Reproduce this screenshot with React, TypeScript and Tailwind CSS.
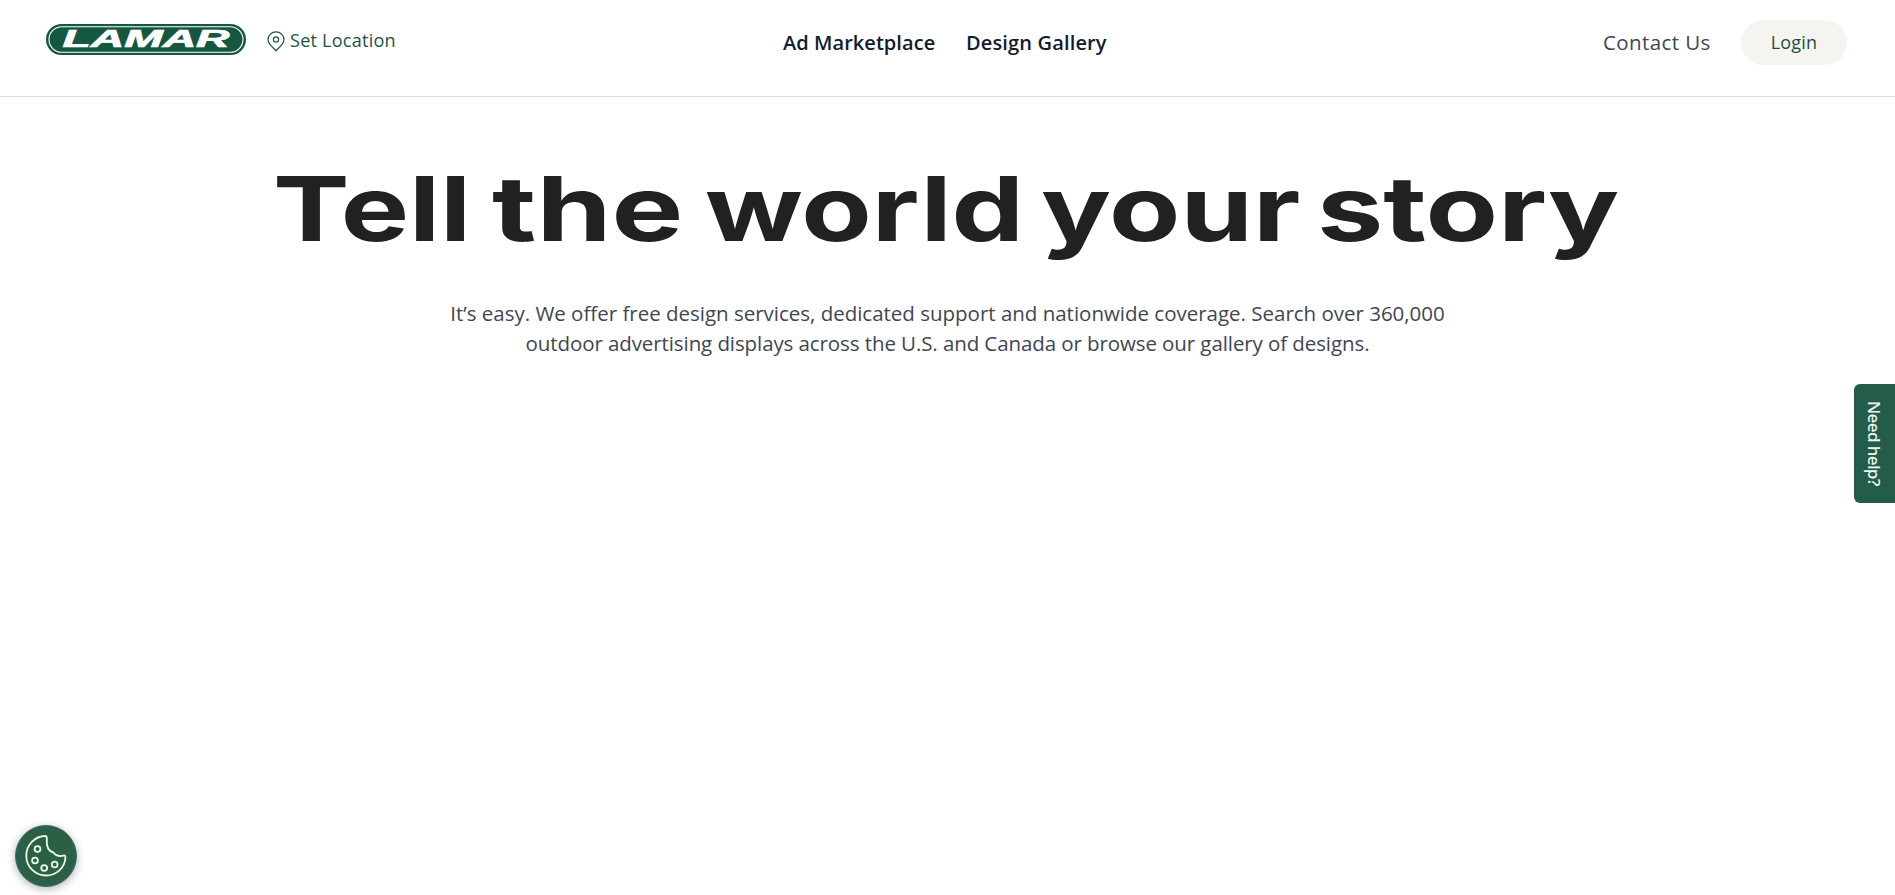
import {ReactNode} from "react";

function Logo() {
    return (
        <svg width="200" height="31" viewBox="0 0 200 31" aria-label="Lamar">
            <rect x="0" y="0" width="200" height="31" rx="15.5" fill="#14593f"/>
            <rect x="3" y="2.7" width="194" height="25.6" rx="12.8" fill="none" stroke="#fff" strokeWidth="1.1"/>
            <text x="16.5" y="23.4" fontFamily="Liberation Sans, sans-serif" fontWeight="700" fontStyle="italic"
                  fontSize="23.2" textLength="167" lengthAdjust="spacingAndGlyphs" fill="#fff" stroke="#fff"
                  strokeWidth="0.7">LAMAR
            </text>
        </svg>
    );
}

function PinIcon() {
    return (
        <svg width="18" height="21" viewBox="0 0 18 21" fill="none" stroke="#1d5242" strokeWidth="1.2">
            <path d="M9 19.8C7.6 17.9 1 13.3 1 8.7a8 7.9 0 0 1 16 0c0 4.6-6.6 9.2-8 11.1Z" strokeLinejoin="round"/>
            <circle cx="9" cy="8.4" r="2.6"/>
        </svg>
    );
}

function CookieIcon() {
    return (
        <svg width="42" height="42" viewBox="0 0 42 42" fill="none" stroke="#e9fbe9" strokeWidth="1.8"
             strokeLinejoin="round">
            <path d="M20.5 1C9.5 1 1.3 10 1.3 20.7c0 11 8.7 19.8 19.6 19.8 10.5 0 19.1-7.8 19.5-18 .1-1.7-.4-2.3-1.9-1.9-4.6 1.2-8.1-.4-10.3-3.2-4-1.1-6.9-5.6-6.4-12.9.1-2-.2-3.5-1.3-3.5Z"/>
            <circle cx="12.5" cy="14" r="2.9"/>
            <circle cx="10" cy="25.5" r="2.9"/>
            <circle cx="19.2" cy="33" r="2.9"/>
            <circle cx="29.7" cy="29.5" r="2.9"/>
        </svg>
    );
}

// Headline words are stretched sideways inside a box of their final width
function Word(props: { className: string, stretch: string, children: ReactNode }) {
    return (
        <span className={"block whitespace-nowrap " + props.className}>
            <span className={"inline-block origin-left " + props.stretch}>{props.children}</span>
        </span>
    );
}

export default function App() {
    return (
        <div className="min-h-[895px] bg-white font-['Open_Sans',sans-serif] overflow-hidden">
            <header className="h-[97px] border-b border-[#dedede] flex items-start justify-between pl-[46px] pr-12">
                <div className="flex w-[737px] pt-6">
                    <Logo/>
                    <a href="#" className="flex ml-[21px] pt-[7px] text-[#1d5242]">
                        <PinIcon/>
                        <span className="ml-[5px] -mt-[3px] text-[18px] leading-6 tracking-[0.26px]">Set Location</span>
                    </a>
                </div>
                <nav className="flex flex-1 gap-8 pt-[29px] text-[20px] leading-7 font-semibold text-[#121c2f]">
                    <a href="#" className="w-[151px] whitespace-nowrap tracking-[0.05px]">Ad Marketplace</a>
                    <a href="#" className="whitespace-nowrap tracking-[0.15px]">Design Gallery</a>
                </nav>
                <div className="flex pt-5">
                    <a href="#" className="w-[138px] pt-[8px] text-[20.5px] leading-7 tracking-[0.4px] text-[#404750]">Contact Us</a>
                    <button className="w-[106px] h-[45px] rounded-full bg-[#f5f4f1] text-[18px] tracking-[0.2px] text-[#1d4f40]">Login</button>
                </div>
            </header>
            <main>
                <h1 className="flex pl-[273px] mt-[57px] h-[110px] text-[90px] leading-[110px] font-bold text-[#212121] font-['Inter',sans-serif]">
                    <Word className="w-[219px]" stretch="scale-x-[1.275]">Tell</Word>
                    <Word className="w-[213px]" stretch="scale-x-[1.340]">the</Word>
                    <Word className="w-[336px]" stretch="scale-x-[1.278]">world</Word>
                    <Word className="w-[276px]" stretch="scale-x-[1.294]">your</Word>
                    <Word className="w-[300px]" stretch="scale-x-[1.315]">story</Word>
                </h1>
                <p className="mt-[34px] text-center text-[20.5px] leading-[30px] text-[#404652]">
                    <span className="tracking-[-0.01px]">It’s easy. We offer free design services, dedicated support and nationwide coverage. Search over 360,000</span>
                    <br/>
                    <span className="tracking-[-0.09px]">outdoor advertising displays across the U.S. and Canada or browse our gallery of designs.</span>
                </p>
            </main>
            <button
                className="fixed right-0 top-[384px] w-[41px] h-[119px] rounded-l-[6px] bg-[#245c4b] text-[#edf7f2] text-[17px] tracking-[-0.6px] font-medium flex items-center justify-center font-['Noto_Sans',sans-serif]">
                <span className="[writing-mode:vertical-rl] whitespace-nowrap">Need help?</span>
            </button>
            <button
                className="fixed left-[15px] top-[825px] w-[62px] h-[62px] rounded-full bg-[#2c6046] border border-[#347072] shadow-[0_2px_8px_rgba(0,0,0,0.3)] flex items-center justify-center">
                <CookieIcon/>
            </button>
        </div>
    );
}
